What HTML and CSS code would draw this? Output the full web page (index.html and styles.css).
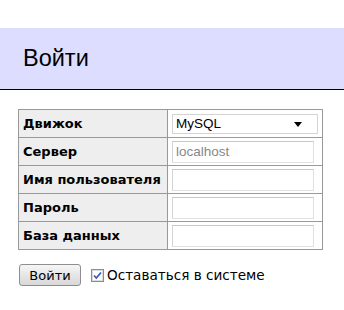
FILE: index.html
```html
<!DOCTYPE html>
<html lang="ru">

<head>
    <meta charset="UTF-8">
    <meta name="viewport" content="width=device-width, initial-scale=1.0">
    <title>Войти</title>
    <link rel="stylesheet" href="styles.css">
</head>

<body>
    <div class="content">
        <h2 class="title">Войти</h2>
        <form action="" class="login">
            <table class="layout">
                <tr>
                    <th>Движок</th>
                    <td>
                        <div class="select-wrap">
                            <select name="driver" class="field select">
                                <option selected>MySQL</option>
                                <option>SQLite</option>
                                <option>PostgreSQL</option>
                            </select>
                            <svg class="arrow" width="8" height="5" viewBox="0 0 8 5"><path d="M0 0H8L4 5Z" fill="#000"/></svg>
                        </div>
                    </td>
                </tr>
                <tr>
                    <th>Сервер</th>
                    <td><input type="text" name="server" class="field" placeholder="localhost"></td>
                </tr>
                <tr>
                    <th>Имя пользователя</th>
                    <td><input type="text" name="username" class="field"></td>
                </tr>
                <tr>
                    <th>Пароль</th>
                    <td><input type="password" name="password" class="field"></td>
                </tr>
                <tr>
                    <th>База данных</th>
                    <td><input type="text" name="db" class="field"></td>
                </tr>
            </table>
            <div class="actions">
                <input type="submit" value="Войти" class="button">
                <label class="remember">
                    <span class="check">
                        <svg width="13" height="13" viewBox="0 0 13 13">
                            <rect x="0.5" y="0.5" width="12" height="12" fill="#f4f4f4" stroke="#8c8c8c"/>
                            <rect x="1.5" y="1.5" width="10" height="10" fill="#fff" stroke="#dcdcdc"/>
                            <path d="M3 6.5L5.3 9L10 3.5" fill="none" stroke="#3a5bb8" stroke-width="1.8"/>
                        </svg>
                    </span>
                    Оставаться в системе
                </label>
            </div>
        </form>
    </div>
</body>

</html>
```

FILE: styles.css
```css
* {
    box-sizing: border-box;
}

body {
    margin: 0;
    font-family: "DejaVu Sans", Verdana, sans-serif;
    font-size: 12.8px;
    color: #000;
    background: #fff;
}

.content {
    padding-top: 28px;
}

.title {
    margin: 0;
    height: 62px;
    padding: 0 0 0 23px;
    display: flex;
    align-items: center;
    font-family: "Liberation Sans", Arial, sans-serif;
    font-size: 23.5px;
    font-weight: normal;
    background: #ddf;
    border-bottom: 1px solid #000;
}

.login {
    padding: 19px 0 0 18px;
}

.layout {
    border-collapse: separate;
    border-spacing: 0;
    border-top: 1px solid #999;
    border-left: 1px solid #999;
    font-size: 13px;
}

.layout th,
.layout td {
    height: 28px;
    border-right: 1px solid #999;
    border-bottom: 1px solid #999;
    vertical-align: middle;
}

.layout th {
    width: 149px;
    padding: 0 3px 0 4px;
    background: #eee;
    text-align: left;
    white-space: nowrap;
}

.layout td {
    width: 155px;
    padding: 0 4px 0 4px;
}

.field {
    display: block;
    width: 142px;
    height: 22px;
    padding: 1px 3px;
    font-family: "Liberation Sans", Arial, sans-serif;
    font-size: 13.5px;
    border: 1px solid #e0e0e0;
    border-top-color: #c8c8c8;
    border-left-color: #d4d4d4;
    background: #fff;
    outline: none;
}

.field::placeholder {
    color: #888;
}

.select-wrap {
    position: relative;
    width: 146px;
}

.select {
    width: 146px;
    height: 20px;
    padding: 0 3px;
    appearance: none;
    -webkit-appearance: none;
    border: 1px solid #d4d4d4;
    border-radius: 0;
    color: #000;
}

.arrow {
    position: absolute;
    right: 16px;
    top: 8px;
}

.actions {
    display: flex;
    align-items: center;
    gap: 10px;
    margin-top: 14px;
    margin-left: 1px;
}

.button {
    width: 62px;
    height: 22px;
    padding: 0;
    font-family: "DejaVu Sans", Verdana, sans-serif;
    font-size: 13px;
    color: #000;
    border: 1px solid #8e8e8e;
    border-radius: 3px;
    background: linear-gradient(#f6f6f6, #e6e6e6 50%, #d8d8d8);
}

.remember {
    display: flex;
    align-items: center;
    gap: 3px;
    font-size: 13.6px;
}

.check {
    display: block;
    height: 13px;
}
```
